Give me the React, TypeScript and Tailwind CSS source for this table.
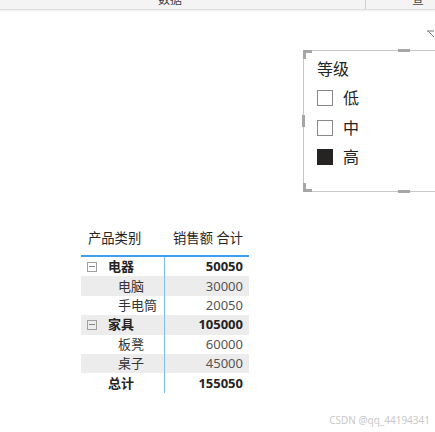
const font = "font-['Noto_Sans','Noto_Sans_CJK_SC',sans-serif]";

type Row = { label: string; value: string; level: 0 | 1 | 2; shade?: boolean };

const rows: Row[] = [
  { label: '电器', value: '50050', level: 0 },
  { label: '电脑', value: '30000', level: 1, shade: true },
  { label: '手电筒', value: '20050', level: 1 },
  { label: '家具', value: '105000', level: 0, shade: true },
  { label: '板凳', value: '60000', level: 1 },
  { label: '桌子', value: '45000', level: 1, shade: true },
  { label: '总计', value: '155050', level: 2 },
];

function Handle({ className }: { className: string }) {
  return <div className={`absolute bg-[#a6a6a6] ${className}`} />;
}

function Slicer() {
  const items = [
    { label: '低', checked: false },
    { label: '中', checked: false },
    { label: '高', checked: true },
  ];
  return (
    <div className="relative ml-[303px] mt-[40px] h-[142px] w-[140px] border border-[#c8c8c8]">
      <Handle className="-left-[1px] -top-[1px] h-[3px] w-[9px]" />
      <Handle className="-left-[1px] -top-[1px] h-[9px] w-[3px]" />
      <Handle className="-left-[1px] -bottom-[1px] h-[3px] w-[9px]" />
      <Handle className="-left-[1px] -bottom-[1px] h-[9px] w-[3px]" />
      <Handle className="left-[94px] -top-[2px] h-[3px] w-[12px]" />
      <Handle className="left-[94px] -bottom-[2px] h-[3px] w-[12px]" />
      <Handle className="-left-[2px] top-[64px] h-[12px] w-[3px]" />
      <div className="pl-[13px] pt-[6px] text-[#252423]">
        <div className="text-[16px] leading-[24px]">等级</div>
        <div className="mt-[9px] flex flex-col gap-[13.5px]">
          {items.map((it) => (
            <div key={it.label} className="flex h-[16px] items-center gap-[10px]">
              <div
                className={`h-[16px] w-[16px] border ${
                  it.checked ? 'border-[#252423] bg-[#252423]' : 'border-[#8a8886] bg-white'
                }`}
              />
              <span className="text-[16px] leading-[16px]">{it.label}</span>
            </div>
          ))}
        </div>
      </div>
    </div>
  );
}

function Matrix() {
  return (
    <div className="ml-[81px] mt-[34px] w-[168px] text-[13px] text-[#252423]">
      <div className="flex h-[29px] items-center pb-[4px]">
        <div className="w-[83px] pl-[7px] text-[13.3px]">产品类别</div>
        <div className="flex-1 pr-[6px] text-right text-[13.3px]">销售额 合计</div>
      </div>
      <div className="h-[2px] bg-[#3a9ff0]" />
      <div className="relative">
        <div className="absolute bottom-0 left-[83px] top-0 w-[1px] bg-[#7cc0f2]" />
        {rows.map((r) => (
          <div
            key={r.label}
            className={`flex h-[19.4px] items-center leading-none ${r.shade ? 'bg-[#ececec]' : ''}`}
          >
            <div className="flex w-[83px] items-center">
              {r.level === 0 ? (
                <div className="ml-[6px] mr-[11px] flex h-[10px] w-[10px] items-center justify-center border border-[#a19f9d]">
                  <div className="h-[1px] w-[6px] bg-[#8a8886]" />
                </div>
              ) : r.level === 1 ? (
                <div className="w-[37px]" />
              ) : (
                <div className="w-[27px]" />
              )}
              <span className={r.level === 1 ? 'text-[#333]' : 'font-bold'}>{r.label}</span>
            </div>
            <div
              className={`flex-1 pr-[6px] text-right ${r.level === 1 ? 'text-[#555]' : 'font-bold'}`}
            >
              {r.value}
            </div>
          </div>
        ))}
      </div>
    </div>
  );
}

export default function App() {
  return (
    <div className={`h-[432px] w-[435px] overflow-hidden bg-white ${font}`}>
      <div className="relative flex h-[10px] border-b border-[#dedede] bg-[#f4f4f4] text-[12px] text-[#444] shadow-[0_1px_2px_rgba(0,0,0,0.08)]">
        <div className="w-[366px] overflow-hidden border-r border-[#d0d0d0]">
          <div className="-mt-[8px] pl-[158px] leading-[16px]">数据</div>
        </div>
        <div className="flex-1 overflow-hidden">
          <div className="-mt-[8px] pl-[46px] leading-[16px]">查询</div>
        </div>
      </div>
      <div className="relative flow-root">
        <svg className="absolute right-0 top-[20px]" width="8" height="8" viewBox="0 0 8 8">
          <path d="M0 1 H7 M1 1 L7 7" stroke="#777" strokeWidth="1" fill="none" />
        </svg>
        <Slicer />
        <Matrix />
        <div className="mt-[20px] pr-[5px] text-right text-[10px] text-[#c8c8c8]">CSDN @qq_44194341</div>
      </div>
    </div>
  );
}
